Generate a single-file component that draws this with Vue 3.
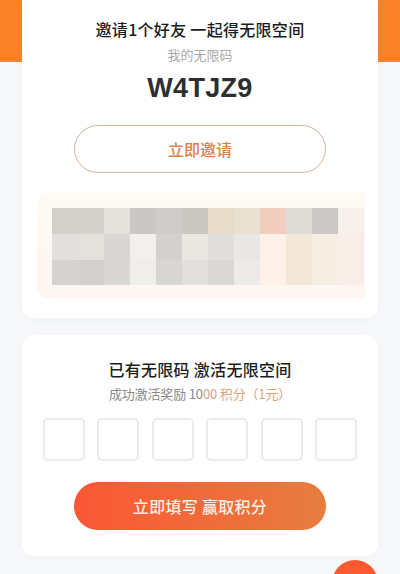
<script setup>
const cells = [
  '#d3d0cc','#d4d1cd','#e3e1dc','#cbc7c4','#cfccc9','#cbc8c4','#e6dcc9','#e9e0d0','#f1cdc0','#dedad5','#ccc8c5','#f6f1ea',
  '#e2e0dc','#e3e1dc','#d9d7d3','#f2f0ec','#d3d1ce','#e9e7e2','#e0dedb','#e9e7e3','#fdf1ea','#f3e8d8','#f6eee2','#f8eee7',
  '#d6d2cf','#d4d0cd','#d9d7d3','#f0eee9','#d8d6d2','#e2e0dc','#dad8d4','#ecebe7','#fdf1ea','#f3e8d8','#f6eee2','#f8eee7'
]
const boxes = [1, 2, 3, 4, 5, 6]
</script>

<template>
  <div class="page">
    <div class="hero"></div>
    <main class="content">
      <section class="card invite">
        <h2 class="title">邀请1个好友 一起得无限空间</h2>
        <p class="label">我的无限码</p>
        <p class="code">W4TJZ9</p>
        <button class="outline">立即邀请</button>
        <div class="poster">
          <div class="mosaic">
            <i v-for="(c, i) in cells" :key="i" :style="{ background: c }"></i>
          </div>
        </div>
      </section>
      <section class="card redeem">
        <h2 class="title">已有无限码 激活无限空间</h2>
        <p class="reward">成功激活奖励 10<span>00 积分（1元）</span></p>
        <div class="boxes">
          <div v-for="b in boxes" :key="b" class="box"></div>
        </div>
        <button class="solid">立即填写 赢取积分</button>
      </section>
    </main>
    <div class="fab"></div>
  </div>
</template>

<style>
html, body { margin: 0; background: #f7f8fa; overflow: hidden; }
</style>

<style scoped>
.page {
  position: relative;
  width: 400px;
  height: 574px;
  overflow: hidden;
  background: #f7f8fa;
  font-family: "Noto Sans CJK SC", "Liberation Sans", sans-serif;
}
.hero {
  position: absolute;
  top: 0;
  left: 0;
  right: 0;
  height: 62px;
  background: #fb8229;
}
.content {
  position: relative;
  display: flex;
  flex-direction: column;
  gap: 17px;
  padding: 0 22px;
}
.card {
  display: flex;
  flex-direction: column;
  align-items: center;
  background: #fff;
  border-radius: 0 0 12px 12px;
  box-shadow: 0 2px 8px rgba(120, 130, 150, 0.05);
}
.invite { height: 318px; }
.redeem { height: 221px; border-radius: 12px; }
.title {
  margin: 0;
  font-size: 16px;
  line-height: 22px;
  font-weight: 500;
  letter-spacing: 0.3px;
  color: #1c1c1c;
}
.invite .title { margin-top: 18px; }
.label {
  margin: 6px 0 0;
  font-size: 13px;
  line-height: 17px;
  color: #a9a9a9;
}
.code {
  margin: 8px 0 0;
  font-family: "Liberation Sans", sans-serif;
  font-size: 27px;
  line-height: 34px;
  font-weight: 700;
  letter-spacing: 0.3px;
  color: #2e2e2e;
}
button {
  width: 252px;
  height: 48px;
  border-radius: 24px;
  font-family: inherit;
  font-size: 16px;
  font-weight: 500;
  padding: 0;
}
.outline {
  margin-top: 20px;
  background: #fff;
  border: 1px solid #dcb695;
  color: #d9824e;
}
.poster {
  align-self: flex-start;
  margin: 19px 0 0 15px;
  width: 328px;
  height: 106px;
  box-sizing: border-box;
  padding: 16px 0 0 15px;
  background: linear-gradient(180deg, #fefaf6, #fdf6f1);
  border-radius: 12px 0 0 12px;
}
.mosaic {
  display: grid;
  grid-template-columns: repeat(12, 26px);
  grid-template-rows: 26px 26px 25px;
}
.redeem .title { margin-top: 23px; }
.reward {
  margin: 5px 0 0;
  font-size: 13px;
  line-height: 18px;
  letter-spacing: -0.15px;
  color: #8a8a8a;
}
.reward span { color: #d9a57c; }
.boxes {
  display: flex;
  gap: 12.4px;
  margin-top: 15px;
}
.box {
  width: 42px;
  height: 43px;
  box-sizing: border-box;
  border: 2px solid #ebebeb;
  border-radius: 5px;
}
.solid {
  margin-top: 21px;
  border: 0;
  color: #fbeee6;
  letter-spacing: 0.3px;
  background: linear-gradient(90deg, #fb5735, #e67d3f);
}
.fab {
  position: absolute;
  left: 332px;
  top: 560px;
  width: 46px;
  height: 46px;
  border-radius: 50%;
  background: #fb5a30;
}
</style>
